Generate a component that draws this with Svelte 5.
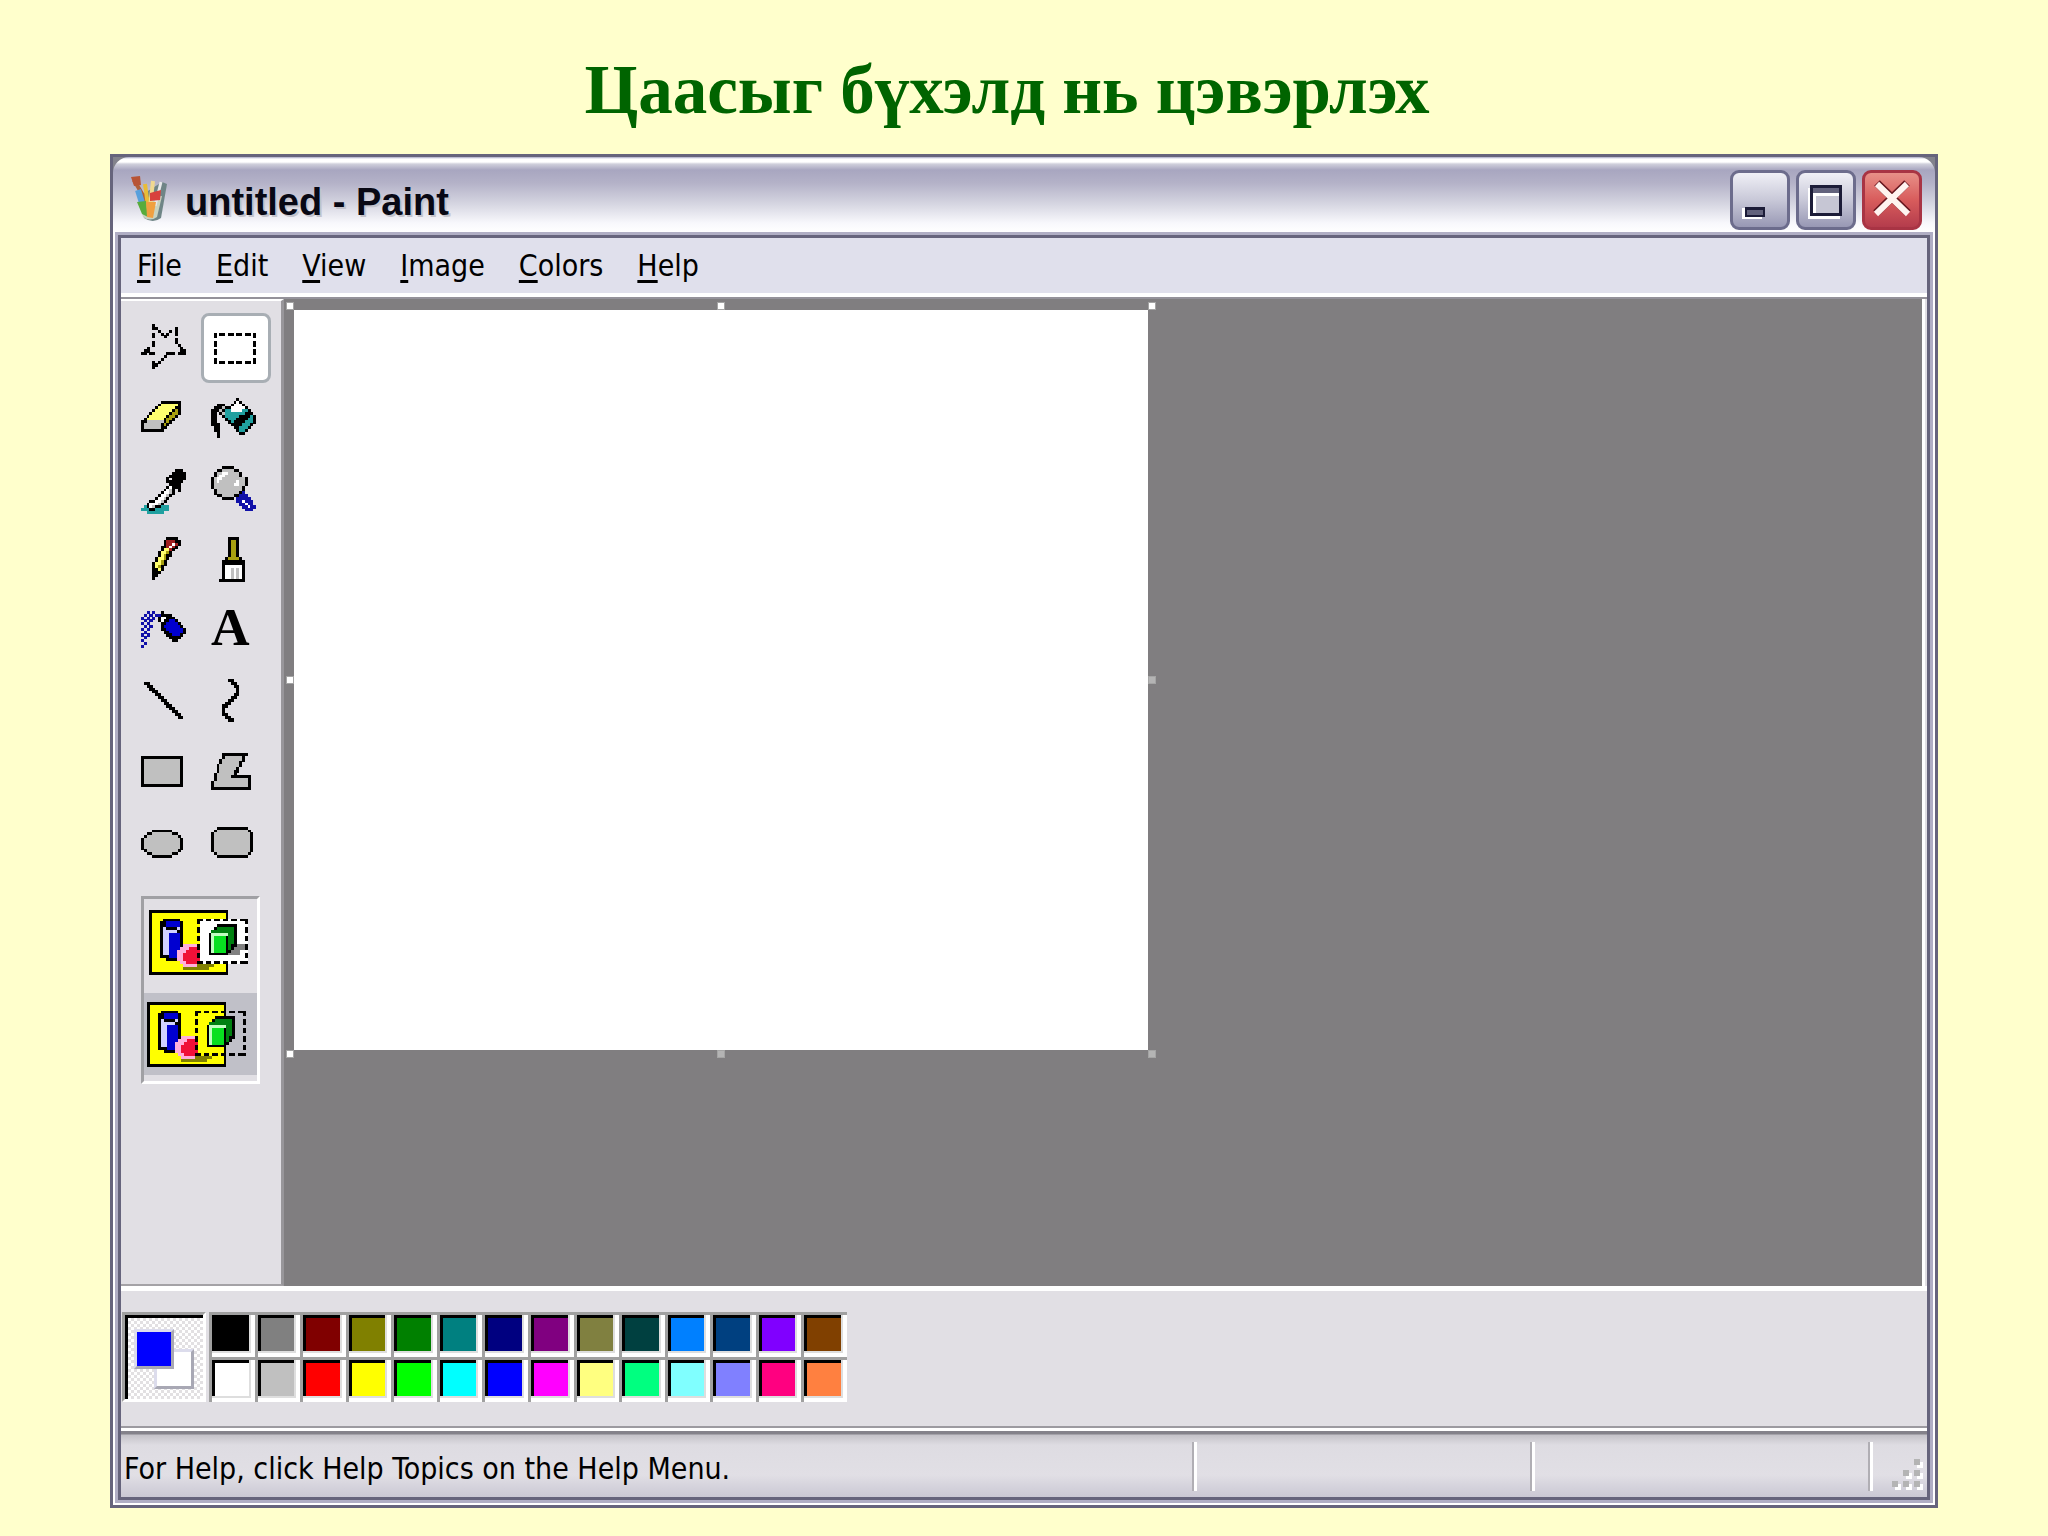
<script lang="ts">
    type Tool = { name: string; rows: string[] };

    const menus = ['File', 'Edit', 'View', 'Image', 'Colors', 'Help'];

    // one letter per pixel in the icon bitmaps
    const inks: Record<string, string> = {
        '#': '#000000',
        w: '#ffffff',
        g: '#c0c0c0',
        y: '#ffff70',
        o: '#a8a010',
        t: '#20a0a0',
        b: '#1010a8',
        B: '#0000d0',
        r: '#a02020'
    };

    const tools: Tool[] = [
        { name: 'Free-Form Select', rows: [
            '....#',
            '....##......#',
            '......#...#.#',
            '....#..#.#..#',
            '....#...#',
            '............#',
            '....#.......#',
            '....#........#',
            '..#...........#',
            '.##...........##',
            '##.##....###.###',
            '........#',
            '.......#',
            '....#.#',
            '....##',
            '....#'
        ] },
        { name: 'Select', rows: [
            '', '', '',
            '.#.##.##.##.##.#',
            '.#.............#',
            '',
            '.#.............#',
            '.#.............#',
            '',
            '.#.............#',
            '.#.............#',
            '',
            '.#.............#',
            '.#.##.##.##.##.#'
        ] },
        { name: 'Eraser', rows: [
            '', '',
            '.......#######',
            '......#yyyyyy#',
            '.....#yyyyyy##',
            '....#yyyyyy#o#',
            '...#yyyyyy#oo#',
            '..#yyyyyy#oo#',
            '.#yyyyyy#oo#',
            '##gggggg#o#',
            '#gggggg#o#',
            '#gggggg##',
            '########'
        ] },
        { name: 'Fill With Color', rows: [
            '',
            '.........#',
            '........#w#',
            '..###..#www#',
            '.###g##wwwww#',
            '###g#ttwwwwtt#',
            '##.#gttttttt###',
            '##..#ttttt####t#',
            '##...#ttt####tt#',
            '##....#t####ttt#',
            '###....####ttt#',
            '.##.....##ttt#',
            '.##......#tt#',
            '..#.......##',
            '..#'
        ] },
        { name: 'Pick Color', rows: [
            '',
            '............###',
            '...........#####',
            '..........######',
            '.........#.#####',
            '.........######',
            '..........####',
            '.........#w###',
            '........#wg#.#',
            '.......#wwg#',
            '......#wwg#',
            '.....#wwg#',
            '...##wwg#',
            '..#wwwg#',
            '.t#wg##ttt',
            'ttt##ttttt',
            '..tttttt'
        ] },
        { name: 'Magnifier', rows: [
            '....####',
            '..##gggg##',
            '.#ggwwgggg#',
            '.#gwwggggg#',
            '#gwwgggggggg#',
            '#gwggggggwgg#',
            '#gggggggwwgg#',
            '#gggggggggg#',
            '.#ggggggggg#',
            '.#gggggggg#b',
            '..##gggg##bbb',
            '....####.bbbbb',
            '.........bbwbbb',
            '..........bbwbb',
            '...........bbwbb',
            '............bbb'
        ] },
        { name: 'Pencil', rows: [
            '.........####',
            '........#rrr##',
            '........#rrwr#',
            '.......##rwr#',
            '.......#yyr#',
            '......#yyo#',
            '......#yo##',
            '.....#yyo#',
            '.....#yo#',
            '....#yyo#',
            '....#yo#',
            '....##y#',
            '....###',
            '....##',
            '....#'
        ] },
        { name: 'Brush', rows: [
            '......####',
            '......#oo#',
            '......#oo#',
            '......#oo#',
            '......#oo#',
            '......#oo#',
            '......#oo#',
            '.....#oooo#',
            '....########',
            '....########',
            '....#wwwwww#',
            '....#wwgwgw#',
            '....#wwgwgw#',
            '....#wwgwgw#',
            '....#wwgwgw#',
            '...#########'
        ] },
        { name: 'Airbrush', rows: [
            '',
            '..b.b..#',
            '.b.b.bb####',
            'b.b.b.#ww###',
            '.b.b..#w##BB#',
            'b.b....##BBBB#',
            '.b.b...#BBBBBB#',
            'b.b....##BBBBBB#',
            '.b......##BBBBB#',
            'b.b......##BBB#',
            '.b........####',
            'b..........##',
            '.b',
            'b'
        ] },
        { name: 'Text', rows: [] },
        { name: 'Line', rows: [
            '',
            '.##',
            '..##',
            '...##',
            '....##',
            '.....##',
            '......##',
            '.......##',
            '........##',
            '.........##',
            '..........##',
            '...........##',
            '............##',
            '.............##'
        ] },
        { name: 'Curve', rows: [
            '......##',
            '.......##',
            '........##',
            '.........#',
            '.........#',
            '........##',
            '.......##',
            '......##',
            '.....##',
            '....##',
            '....#',
            '....#',
            '....##',
            '.....##',
            '......##'
        ] },
        { name: 'Rectangle', rows: [
            '', '',
            '###############',
            '#ggggggggggggg#',
            '#ggggggggggggg#',
            '#ggggggggggggg#',
            '#ggggggggggggg#',
            '#ggggggggggggg#',
            '#ggggggggggggg#',
            '#ggggggggggggg#',
            '#ggggggggggggg#',
            '#ggggggggggggg#',
            '###############'
        ] },
        { name: 'Polygon', rows: [
            '',
            '....#########',
            '....#gggggg#',
            '...#ggggggg#',
            '...#gggggg#',
            '..#ggggggg#',
            '..#gggggg#',
            '..#ggggg##',
            '.#gggggg#',
            '.#ggggg#######',
            '.#ggggggggggg#',
            '#gggggggggggg#',
            '#gggggggggggg#',
            '##############'
        ] },
        { name: 'Ellipse', rows: [
            '', '', '',
            '....#######',
            '..##ggggggg##',
            '.#ggggggggggg#',
            '#ggggggggggggg#',
            '#ggggggggggggg#',
            '#ggggggggggggg#',
            '#ggggggggggggg#',
            '.#ggggggggggg#',
            '..##ggggggg##',
            '....#######'
        ] },
        { name: 'Rounded Rectangle', rows: [
            '', '',
            '..###########',
            '.#ggggggggggg#',
            '#ggggggggggggg#',
            '#ggggggggggggg#',
            '#ggggggggggggg#',
            '#ggggggggggggg#',
            '#ggggggggggggg#',
            '#ggggggggggggg#',
            '#ggggggggggggg#',
            '.#ggggggggggg#',
            '..###########'
        ] }
    ];

    const colors = [
        '#000000', '#808080', '#800000', '#808000', '#008000', '#008080', '#000080',
        '#800080', '#808040', '#004040', '#0080ff', '#004080', '#8000ff', '#804000',
        '#ffffff', '#c0c0c0', '#ff0000', '#ffff00', '#00ff00', '#00ffff', '#0000ff',
        '#ff00ff', '#ffff80', '#00ff80', '#80ffff', '#8080ff', '#ff0080', '#ff8040'
    ];

    // the three on the canvas edges that can be dragged are drawn grey
    const handles = ['nw', 'n', 'ne', 'w', '', 'e', 'sw', 's', 'se'];
    const draggable = ['e', 's', 'se'];

    let activeTool = $state('Select');
    let opaque = $state(false);
    let foreground = $state('#0000ff');
</script>

<main>
    <h1>Цаасыг бүхэлд нь цэвэрлэх</h1>

    <section class="window">
        <header class="titlebar">
            <svg class="logo" viewBox="0 0 36 46" aria-hidden="true">
                <path d="M9 20 L13 42 Q22 48 30 42 L36 8 L31 6 Z" fill="#6f8586" />
                <path d="M8 23 L12 41 Q19 46 26 41 L31 20 Z" fill="#c9d3c0" />
                <path d="M3 4 L17 28" stroke="#b06038" stroke-width="4" />
                <path d="M0 1 L9 0 L10 9 L3 10 Z" fill="#b85434" />
                <path d="M7 14 L12 30" stroke="#58a0dc" stroke-width="6" />
                <path d="M14 8 L17 30" stroke="#e8bc38" stroke-width="4" />
                <path d="M22 5 L19 32" stroke="#f0d890" stroke-width="4" />
                <path d="M30 6 L24 30" stroke="#e8e8ea" stroke-width="3" />
                <path d="M19 17 L30 14 L29 24 L19 25 Z" fill="#d8403c" />
                <path d="M6 26 L15 25 L17 41 L11 38 Z" fill="#58ac3c" />
                <path d="M15 26 L25 26 L22 42 L16 41 Z" fill="#f0a040" />
            </svg>
            <h2>untitled - Paint</h2>
            <div class="controls">
                <button class="control" aria-label="Minimize">
                    <svg viewBox="0 0 60 60">
                        <path d="M12 38H32V49H12Z" fill="#fff" />
                        <path d="M15 37H35V47H15Z" fill="#1c1c38" />
                        <path d="M17 40H33V45H17Z" fill="#62627c" />
                    </svg>
                </button>
                <button class="control" aria-label="Maximize">
                    <svg viewBox="0 0 60 60">
                        <path d="M12 18H44V49H12Z" fill="#fff" />
                        <path d="M14 15H46V46H14Z" fill="#1c1c38" />
                        <path d="M17 18H43V23H17Z" fill="#62627c" />
                        <path d="M17 23H43V43H17Z" fill="#fff" />
                        <path d="M20 26H43V43H20Z" fill="#c6c6d4" />
                    </svg>
                </button>
                <button class="control close" aria-label="Close">
                    <svg viewBox="0 0 60 60">
                        <path d="M15 13L46 43M45 13L14 43" stroke="#681820" stroke-width="8" />
                        <path d="M15 14L46 44M45 14L14 44" stroke="#fff4f0" stroke-width="6" />
                    </svg>
                </button>
            </div>
        </header>

        <div class="frame">
            <nav>
                {#each menus as menu}
                    <button><u>{menu[0]}</u>{menu.slice(1)}</button>
                {/each}
            </nav>

            <div class="middle">
                <aside>
                    <div class="tools">
                        {#each tools as tool}
                            <button
                                class="tool"
                                class:active={activeTool === tool.name}
                                aria-label={tool.name}
                                onclick={() => (activeTool = tool.name)}
                            >
                                <svg viewBox="0 0 16 17" shape-rendering="crispEdges">
                                    {#if tool.name === 'Text'}
                                        <text x="0" y="13">A</text>
                                    {/if}
                                    {#each tool.rows as row, y}
                                        {#each row as dot, x}
                                            {#if dot !== '.'}
                                                <rect {x} {y} width="1.1" height="1.1" fill={inks[dot]} />
                                            {/if}
                                        {/each}
                                    {/each}
                                </svg>
                            </button>
                        {/each}
                    </div>

                    <div class="options">
                        {#each [true, false] as solid}
                            <button
                                class="option"
                                class:picked={opaque === solid}
                                aria-label={solid ? 'Opaque' : 'Transparent'}
                                onclick={() => (opaque = solid)}
                            >
                                <svg viewBox="0 0 36 24" shape-rendering="crispEdges">
                                    <rect width="28" height="23" />
                                    <rect x="1" y="1" width="26" height="21" fill="#ffff00" />
                                    <path d="M12 20H17V19H23V20H21V21H12Z" fill="#808000" />
                                    <path d="M5 3H11V4H12V17H11V18H6V17H4V4H5Z" />
                                    <path d="M6 4H11V6H6ZM7 8H11V16H10V17H7Z" fill="#0000d0" />
                                    <path d="M5 6H6V7H10V6H11V7H10V8H7V16H5Z" fill="#d0d0ff" />
                                    {#if solid}
                                        <rect x="18" y="3" width="17" height="16" fill="#ffffff" />
                                        <path d="M30 12H34V14H32V16H27Z" fill="#808080" />
                                    {/if}
                                    <path d="M12 12H17V13H18V19H17V20H12V19H11V18H10V14H11V13H12Z" fill="#ffb0dc" />
                                    <path d="M14 13H17V14H18V18H17V19H13V18H12V15H13V14H14Z" fill="#f01038" />
                                    <path d="M24 5H31V13H30V14H29V15H28V16H21V8H22V7H23V6H24Z" />
                                    <path d="M24 6H30V7H29V8H22V7H24Z" fill="#008010" />
                                    <path d="M28 8H29V7H30V12H29V14H28Z" fill="#008010" />
                                    <path d="M22 8H28V9H23V15H22Z" fill="#c0ffc0" />
                                    <path d="M23 9H27V15H23Z" fill="#08e020" />
                                    <path
                                        d="M17 3H35M17 18H35"
                                        transform="translate(0 .5)"
                                        stroke="#000"
                                        stroke-dasharray="2 1"
                                    />
                                    <path
                                        d="M17 3V19M34 3V19"
                                        transform="translate(.5 0)"
                                        stroke="#000"
                                        stroke-dasharray="2 1"
                                    />
                                </svg>
                            </button>
                        {/each}
                    </div>
                </aside>

                <div class="workspace">
                    <div class="canvas">
                        <div class="handles">
                            {#each handles as handle}
                                <i class:handle={handle !== ''} class:grey={draggable.includes(handle)}></i>
                            {/each}
                        </div>
                    </div>
                </div>
            </div>

            <div class="palette">
                <div class="current">
                    <span class="chip back"></span>
                    <span class="chip front" style="background-color: {foreground}"></span>
                </div>
                <div class="swatches">
                    {#each colors as color}
                        <button class="swatch" aria-label={color} onclick={() => (foreground = color)}>
                            <span style="background-color: {color}"></span>
                        </button>
                    {/each}
                </div>
            </div>

            <footer>
                <p>For Help, click Help Topics on the Help Menu.</p>
                <span class="pane"></span>
                <span class="pane"></span>
                <span class="pane last">
                    <svg class="grip" viewBox="0 0 32 32" aria-hidden="true">
                        {#each [[22, 0], [11, 11], [22, 11], [0, 22], [11, 22], [22, 22]] as [x, y]}
                            <rect x={x + 3} y={y + 3} width="6" height="6" fill="#ffffff" />
                            <rect {x} {y} width="6" height="6" fill="#b4b4b4" />
                        {/each}
                    </svg>
                </span>
            </footer>
        </div>
    </section>
</main>

<style>
    :global(body) {
        margin: 0;
    }

    main {
        box-sizing: border-box;
        min-height: 100vh;
        display: flex;
        flex-direction: column;
        padding: 0 110px 28px;
        background-color: #ffffcc;
        font-family: "DejaVu Sans Condensed", "DejaVu Sans", sans-serif;
        font-size: 30px;
        color: #000;
    }

    h1 {
        box-sizing: border-box;
        height: 154px;
        margin: 0;
        padding: 51px 34px 0 0;
        font: bold 69px/78px "Liberation Serif", serif;
        text-align: center;
        color: #006400;
    }

    button {
        margin: 0;
        padding: 0;
        border: none;
        background: none;
        font: inherit;
        color: inherit;
    }

    svg {
        display: block;
    }

    .window {
        flex: 1;
        display: flex;
        flex-direction: column;
        border: 3px solid #66647c;
        background-color: #82828c;
    }

    .titlebar {
        box-sizing: border-box;
        height: 75px;
        display: flex;
        align-items: flex-start;
        padding: 13px 13px 0 18px;
        border-radius: 16px 16px 0 0;
        background: linear-gradient(#a8a8c4 0, #ffffff 2px, #ffffff 5px, #d0d0dc 7px, #a8a6c0 13px, #b4b2c8 26px, #d4d4e0 46px, #f8f8fc 66px, #ffffff 75px);
    }

    .logo {
        width: 36px;
        height: 46px;
        margin-top: 6px;
    }

    h2 {
        flex: 1;
        margin: 8px 0 0 18px;
        font: bold 38px/48px "Liberation Sans", sans-serif;
        color: #080814;
        text-shadow: 2px 2px 0 #c4c4cc;
    }

    .controls {
        display: flex;
        gap: 6px;
    }

    .control {
        box-sizing: border-box;
        width: 60px;
        height: 60px;
        border: 3px solid #6c6c8c;
        border-radius: 9px;
        background: linear-gradient(#f0f0f6, #c8c8d8 50%, #9898b4);
    }

    .control svg {
        width: 60px;
        height: 60px;
        margin: -3px;
    }

    .close {
        border-color: #a83444;
        background: linear-gradient(#e89088, #d85c5c 50%, #b43c4c);
    }

    .frame {
        flex: 1;
        display: flex;
        flex-direction: column;
        border: solid #ffffff;
        border-width: 0 2px 2px;
        padding: 6px;
        background-color: #e1dfe4;
        box-shadow: inset 0 0 0 3px #b0aec4, inset 0 0 0 6px #66647c;
    }

    nav {
        display: flex;
        gap: 34px;
        padding: 0 16px;
        background-color: #e0e0ec;
        border-bottom: 4px solid #ffffff;
        line-height: 55px;
    }

    u {
        text-decoration-thickness: 3px;
        text-underline-offset: 4px;
    }

    .middle {
        flex: 1;
        display: flex;
        border-top: 2px solid #94929a;
    }

    aside {
        box-sizing: border-box;
        width: 163px;
        padding: 12px 9px 0 10px;
        border-top: 2px solid #ffffff;
        border-right: 3px solid #98969a;
        border-bottom: 2px solid #a4a2a6;
    }

    .tools {
        display: grid;
        grid-template-columns: 70px 70px;
        grid-auto-rows: 71px;
    }

    .tool {
        box-sizing: border-box;
        height: 70px;
        padding: 8px 7px 0;
        border: 3px solid transparent;
        border-radius: 8px;
        display: flex;
        align-items: flex-start;
    }

    .tool.active {
        border-color: #a8aeb4;
        background-color: #ffffff;
    }

    .tool svg {
        width: 45px;
        height: 48px;
        overflow: visible;
    }

    text {
        font: bold 19px "Liberation Serif", serif;
    }

    .options {
        box-sizing: border-box;
        width: 119px;
        height: 188px;
        margin: 15px 0 0 10px;
        display: flex;
        flex-direction: column;
        gap: 4px;
        padding-top: 8px;
        border: 3px solid #a0a0a4;
        border-right-color: #ffffff;
        border-bottom-color: #ffffff;
    }

    .option {
        box-sizing: border-box;
        height: 82px;
        padding: 3px 5px 11px;
    }

    .option.picked {
        padding: 9px 3px 5px;
        background-color: #c0c0c8;
    }

    .option svg {
        width: 102px;
        height: 68px;
    }

    .workspace {
        flex: 1;
        padding: 11px 10px;
        border-right: 3px solid #ffffff;
        margin-right: 2px;
        background-color: #807e80;
    }

    .canvas {
        position: relative;
        width: 854px;
        height: 740px;
        background-color: #ffffff;
    }

    .handles {
        position: absolute;
        inset: -8px;
        display: grid;
        grid-template-columns: repeat(3, 8px);
        grid-template-rows: repeat(3, 8px);
        justify-content: space-between;
        align-content: space-between;
    }

    .handle {
        border: 1px solid #a4a4a4;
        background-color: #ffffff;
    }

    .handle.grey {
        background-color: #b4b4b4;
    }

    .palette {
        display: flex;
        gap: 3px;
        padding: 21px 1px 24px;
        border-top: 5px solid #ffffff;
        border-bottom: 2px solid #9c9aa0;
    }

    .current {
        box-sizing: border-box;
        width: 84px;
        height: 90px;
        display: grid;
        grid-template-columns: 20px 20px 20px;
        grid-template-rows: 20px 20px 20px;
        padding: 14px 0 0 9px;
        border: 3px solid #a0a0a0;
        border-right-color: #ffffff;
        border-bottom-color: #ffffff;
        box-shadow: inset 3px 3px 0 #000;
        background: repeating-conic-gradient(#e2e0e2 0 25%, #ffffff 0 50%) 0 0 / 6px 6px;
    }

    .chip {
        border: 3px solid #dcdcec;
        border-right-color: #a8a8b4;
        border-bottom-color: #a8a8b4;
    }

    .front {
        grid-area: 1 / 1 / 3 / 3;
    }

    .back {
        grid-area: 2 / 2 / 4 / 4;
        background-color: #ffffff;
    }

    .swatches {
        width: 638px;
        display: grid;
        grid-template-columns: repeat(14, 1fr);
        grid-auto-rows: 45px;
    }

    .swatch {
        display: flex;
        border: solid #a0a0a0;
        border-width: 3px 0 0 3px;
        box-shadow: inset -4px -4px 0 #ffffff;
        padding: 0 4px 4px 0;
    }

    .swatch span {
        flex: 1;
        align-self: stretch;
        border: solid #dedede;
        border-width: 0 2px 2px 0;
        box-shadow: inset 3px 3px 0 #000;
    }

    footer {
        box-sizing: border-box;
        height: 69px;
        display: flex;
        border-top: 3px solid #ffffff;
        padding-bottom: 6px;
        background: linear-gradient(#84828a 0, #84828a 3px, #c4c2c8 4px, #dedce2 14px, #e1dfe5 44px, #cac8d4 66px);
    }

    p {
        flex: 1;
        margin: 0;
        padding: 8px 3px 0;
        line-height: 60px;
    }

    .pane {
        box-sizing: border-box;
        width: 338px;
        margin-top: 11px;
        border-left: 2px solid #b0aeb4;
        box-shadow: inset 3px 0 0 #ffffff;
    }

    .pane.last {
        width: 59px;
        display: flex;
        justify-content: flex-end;
        align-items: flex-end;
    }

    .grip {
        width: 32px;
        height: 32px;
        margin-right: 3px;
    }
</style>
